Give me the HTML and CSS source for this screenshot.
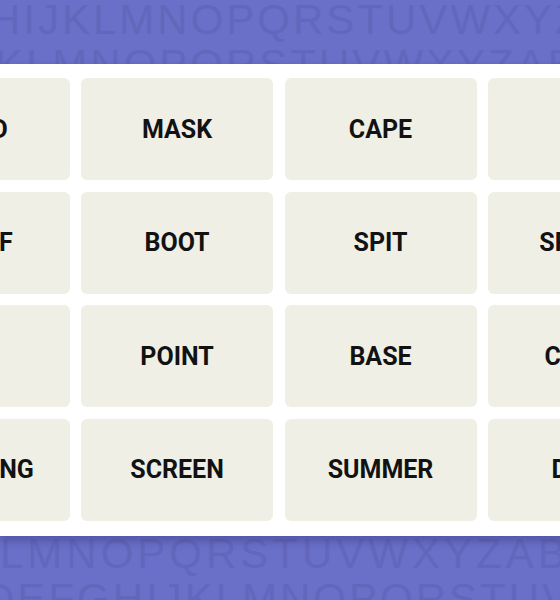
FILE: index.html
```html
<!DOCTYPE html>
<html>
<head>
<meta charset="utf-8">
<link rel="stylesheet" href="styles.css">
</head>
<body>
<div class="stage">
  <div class="letters" aria-hidden="true">
    <div class="row r0">HIJKLMNOPQRSTUVWXYZ</div>
    <div class="row r1">KLMNOPQRSTUVWXYZAB</div>
    <div class="gap"></div>
    <div class="row r12">LMNOPQRSTUVWXYZAB</div>
    <div class="row r13">DEFGHIJKLMNOPQRSTUV</div>
  </div>
  <div class="board">
    <div class="grid">
      <div class="card">HOOD</div>
      <div class="card">MASK</div>
      <div class="card">CAPE</div>
      <div class="card">TIE</div>
      <div class="card">SCARF</div>
      <div class="card">BOOT</div>
      <div class="card">SPIT</div>
      <div class="card">SPRING</div>
      <div class="card">TIP</div>
      <div class="card">POINT</div>
      <div class="card">BASE</div>
      <div class="card">CLOAK</div>
      <div class="card">CLOTHING</div>
      <div class="card">SCREEN</div>
      <div class="card">SUMMER</div>
      <div class="card">DUCK</div>
    </div>
  </div>
</div>
</body>
</html>
```

FILE: styles.css
```css
html, body {
  margin: 0;
  padding: 0;
  overflow: hidden;
  background: #6a6fc7;
}

.stage {
  width: 560px;
  height: 600px;
  display: grid;
  overflow: hidden;
}

.letters {
  grid-area: 1 / 1;
  margin-top: -1.7px;
  display: flex;
  flex-direction: column;
  font-family: "Liberation Sans", Arial, sans-serif;
  font-size: 42px;
  line-height: 44.5px;
  letter-spacing: 3px;
  color: #6367bc;
  white-space: nowrap;
}

.gap { height: 445px; flex: none; }

.row { flex: none; }
.r0 { margin-left: -10px; }
.r1 { margin-left: -5px; }
.r12 { margin-left: 0; letter-spacing: 4px; }
.r13 { margin-left: -16px; }

.board {
  grid-area: 1 / 1;
  align-self: start;
  margin-top: 64px;
  height: 472px;
  box-sizing: border-box;
  padding: 14px 0 15px;
  background: #ffffff;
  box-shadow: 0 5px 8px rgba(40, 40, 100, 0.35);
  overflow: hidden;
}

.grid {
  display: grid;
  grid-template-columns: repeat(4, 192px);
  grid-auto-rows: 102px;
  column-gap: 11.5px;
  row-gap: 11.67px;
  margin-left: -122.5px;
  width: 803px;
}

.card {
  background: #efefe6;
  border-radius: 6px;
  display: flex;
  align-items: center;
  justify-content: center;
  font-family: Roboto, "Liberation Sans", sans-serif;
  font-weight: 700;
  font-size: 25px;
  color: #121212;
}
```
